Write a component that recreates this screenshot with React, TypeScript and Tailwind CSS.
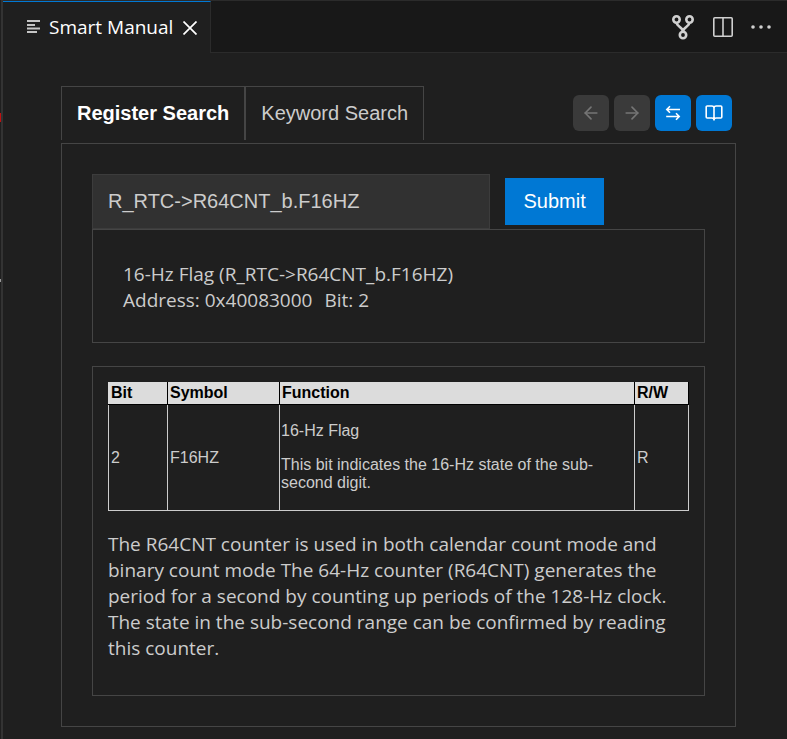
import React from "react";
import { ArrowLeft, ArrowRight } from "lucide-react";

interface Column {
  title: string;
  width: string;
}

const columns: Column[] = [
  { title: "Bit", width: "w-[59px]" },
  { title: "Symbol", width: "w-[112px]" },
  { title: "Function", width: "w-auto" },
  { title: "R/W", width: "w-[54px]" },
];

const ListIcon = () => (
  <svg width="14" height="16" viewBox="0 0 14 16" fill="#c5c5c5">
    <path d="M0 0h13v2H0zM0 4h8v2H0zM0 7.500h13v2H0zM0 11h10v2H0z" />
  </svg>
);

const CloseIcon = () => (
  <svg width="14" height="14" viewBox="0 0 14 14" fill="none">
    <path d="M.5.5l13 13M13.5.5l-13 13" stroke="#fff" strokeWidth="1.7" />
  </svg>
);

const ForkIcon = () => (
  <svg width="24" height="26" viewBox="0 0 24 26" fill="none">
    <g stroke="#d0d0d0" strokeWidth="2.6">
      <circle cx="5.500" cy="5.500" r="3.200" />
      <circle cx="18.500" cy="5.500" r="3.200" />
      <circle cx="12" cy="21" r="3.200" />
      <path d="M5.500 8.500c0 4.200 6.500 4.500 6.500 9.500M18.500 8.500c0 4.200-6.500 4.500-6.500 9.500" />
    </g>
  </svg>
);

const SplitIcon = () => (
  <svg width="20" height="20" viewBox="0 0 20 20" fill="none">
    <rect x=".8" y=".8" width="18.4" height="18.4" rx="1" stroke="#d0d0d0" strokeWidth="1.6" />
    <path d="M10 1v18" stroke="#d0d0d0" strokeWidth="1.6" />
  </svg>
);

const MoreIcon = () => (
  <svg width="20" height="4" viewBox="0 0 20 4" fill="#d0d0d0">
    <circle cx="2" cy="2" r="1.8" />
    <circle cx="10" cy="2" r="1.8" />
    <circle cx="18" cy="2" r="1.8" />
  </svg>
);

const SwapIcon = () => (
  <svg width="16" height="16" viewBox="0 0 16 16" fill="none">
    <path
      d="M15 4.500H1.800M5 1.300L1.800 4.500 5 7.700M1.200 11.500h13M11 8.300l3.200 3.200-3.200 3.200"
      stroke="#fff"
      strokeWidth="1.6"
    />
  </svg>
);

const BookIcon = () => (
  <svg width="18" height="16" viewBox="0 0 18 16" fill="none">
    <path
      d="M9 3C9 1.800 8 1 6.800 1H2.200C1.600 1 1.200 1.400 1.200 2v10c0 .6.4 1 1 1h4.600C8 13 9 13.800 9 15c0-1.200 1-2 2.200-2h4.600c.6 0 1-.4 1-1V2c0-.6-.4-1-1-1h-4.600C10 1 9 1.800 9 3zM9 3v12.500"
      stroke="#fff"
      strokeWidth="1.6"
    />
  </svg>
);

const EditorTabs = () => (
  <header className="flex h-[53px] border-t border-[#2b2b2b] bg-[#181818]">
    <div className="flex items-center border-t border-r border-t-[#0078d4] border-r-[#2b2b2b] bg-[#1f1f1f] pr-[13px] pl-6 text-white">
      <ListIcon />
      <span className="ml-2 font-['Open_Sans',sans-serif] text-[19px]">
        Smart Manual
      </span>
      <button className="ml-[10px]" aria-label="Close">
        <CloseIcon />
      </button>
    </div>
    <div className="flex flex-1 items-center justify-end gap-[18px] border-b border-[#2b2b2b] pr-4">
      <button aria-label="Open changes">
        <ForkIcon />
      </button>
      <button aria-label="Split editor">
        <SplitIcon />
      </button>
      <button aria-label="More actions">
        <MoreIcon />
      </button>
    </div>
  </header>
);

const SearchTabs = () => (
  <div className="mb-[3px] flex items-center justify-between pr-1">
    <div role="tablist" className="flex text-[20px] leading-[53px]">
      <button
        role="tab"
        aria-selected="true"
        className="border border-b-0 border-[#454545] px-[15px] font-bold text-white"
      >
        Register Search
      </button>
      <button
        role="tab"
        aria-selected="false"
        className="border border-b-0 border-[#454545] px-[15px]"
      >
        Keyword Search
      </button>
    </div>
    <div className="flex gap-[5px]">
      <button
        disabled
        aria-label="Back"
        className="flex size-9 items-center justify-center rounded-md bg-[#3a3a3a] text-[#757575]"
      >
        <ArrowLeft size={20} />
      </button>
      <button
        disabled
        aria-label="Forward"
        className="flex size-9 items-center justify-center rounded-md bg-[#3a3a3a] text-[#757575]"
      >
        <ArrowRight size={20} />
      </button>
      <button
        aria-label="Switch"
        className="flex size-9 items-center justify-center rounded-md bg-[#0078d4]"
      >
        <SwapIcon />
      </button>
      <button
        aria-label="Open manual"
        className="flex size-9 items-center justify-center rounded-md bg-[#0078d4]"
      >
        <BookIcon />
      </button>
    </div>
  </div>
);

const RegisterTable = () => (
  <table className="w-full max-w-[581px] table-fixed border-collapse text-left text-base leading-[18px]">
    <thead className="bg-[#dcdcdc] text-black">
      <tr>
        {columns.map((column) => (
          <th
            key={column.title}
            className={`${column.width} border border-black border-t-[#dcdcdc] px-0.5 pt-px pb-0.5 first:border-l-[#dcdcdc]`}
          >
            {column.title}
          </th>
        ))}
      </tr>
    </thead>
    <tbody>
      <tr>
        <td className="border border-t-black border-[#ccc] px-0.5">2</td>
        <td className="border border-t-black border-[#ccc] px-0.5">F16HZ</td>
        <td className="border border-t-black border-[#ccc] px-px pt-px pb-0.5">
          <p className="my-4">16-Hz Flag</p>
          <p className="my-4">
            This bit indicates the 16-Hz state of the sub-second digit.
          </p>
        </td>
        <td className="border border-t-black border-[#ccc] px-0.5">R</td>
      </tr>
    </tbody>
  </table>
);

const App = () => {
  return (
    <div className="relative min-h-screen border-l border-[#1f1f1f] bg-[#1f1f1f] font-['Liberation_Sans',Arial,sans-serif] text-[#ccc]">
      {/* edge of the neighbouring editor */}
      <span className="absolute top-[113px] -left-px h-[9px] w-px bg-[#c01010]" />
      <span className="absolute top-[279px] -left-px h-[3px] w-px bg-[#999]" />
      <div className="min-h-screen border-l-2 border-[#333]">
        <EditorTabs />
        <main className="pt-[33px] pr-[51px] pb-3 pl-[58px]">
          <SearchTabs />
          <section className="border border-[#454545] p-[30px]">
            <form className="flex items-center gap-[15px]">
              <input
                aria-label="Register"
                defaultValue="R_RTC->R64CNT_b.F16HZ"
                className="h-[55px] w-[65%] border border-[#3c3c3c] bg-[#313131] px-[15px] text-[20px]"
              />
              <button
                type="button"
                className="h-[47px] bg-[#0078d4] px-[18px] pb-0.5 text-[20px] text-white"
              >
                Submit
              </button>
            </form>
            <div className="border border-[#454545] px-[30px] pt-[31px] pb-[29px] font-['Open_Sans',sans-serif] text-[19px] leading-[26px]">
              <p>{"16-Hz Flag (R_RTC->R64CNT_b.F16HZ)"}</p>
              <p>
                <span className="mr-3">Address: 0x40083000</span>
                <span>Bit: 2</span>
              </p>
            </div>
            <div className="mt-[23px] border border-[#454545] px-[15px] pt-[15px] pb-[34px]">
              <RegisterTable />
              <p className="mt-5 font-['Open_Sans',sans-serif] text-[19px] leading-[26px]">
                The R64CNT counter is used in both calendar count mode and
                binary count mode The 64-Hz counter (R64CNT) generates the
                period for a second by counting up periods of the 128-Hz clock.
                The state in the sub-second range can be confirmed by reading
                this counter.
              </p>
            </div>
          </section>
        </main>
      </div>
    </div>
  );
};

export default App;
